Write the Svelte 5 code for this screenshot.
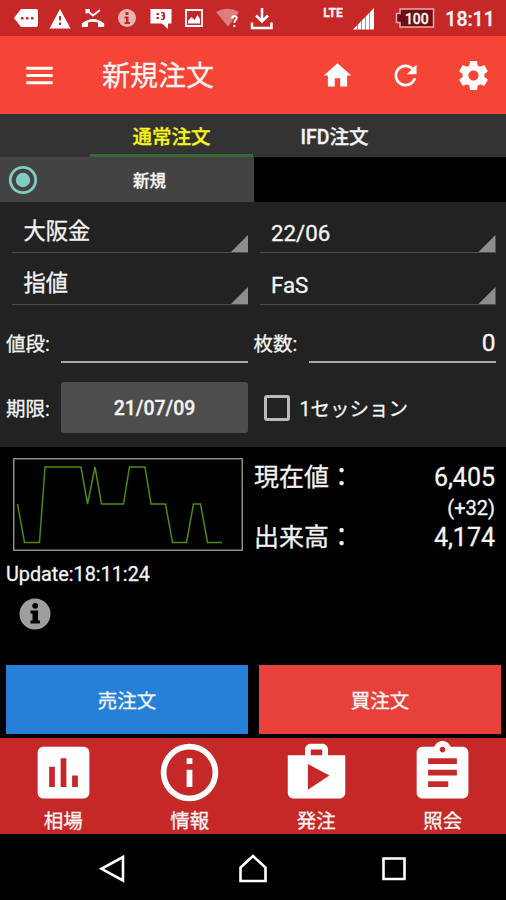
<script>
  let tab = $state("normal");
  let product = $state("大阪金");
  let month = $state("22/06");
  let priceType = $state("指値");
  let condition = $state("FaS");
  let price = $state("");
  let quantity = $state("0");
  let session = $state(false);

  const chart = "4.5,46 11.5,84.5 26.5,84.5 32,9 68,9 74.5,46 82,9 88.5,46 110.5,46 116.5,9 132,9 138,46 152.5,46 159.5,84.5 173.5,84.5 180.5,46 187.5,46 194.5,84.5 209,84.5";

  const menus = [
    { label: "相場", d: "M19 3H5c-1.1 0-2 .9-2 2v14c0 1.1.9 2 2 2h14c1.1 0 2-.9 2-2V5c0-1.1-.9-2-2-2zM9 17H7v-7h2v7zm4 0h-2V7h2v10zm4 0h-2v-4h2v4z" },
    { label: "情報", d: "M11 17h2v-6h-2v6zm1-15C6.48 2 2 6.48 2 12s4.48 10 10 10 10-4.480 10-10S17.520 2 12 2zm0 18c-4.410 0-8-3.590-8-8s3.590-8 8-8 8 3.590 8 8-3.590 8-8 8zM11 9h2V7h-2v2z" },
    { label: "発注", d: "M16 6V4c0-1.110-.89-2-2-2h-4c-1.110 0-2 .89-2 2v2H2v13c0 1.110.89 2 2 2h16c1.110 0 2-.89 2-2V6h-6zm-6-2h4v2h-4V4zM9 18V9l7.500 4L9 18z" },
    { label: "照会", d: "M19 3h-4.180C14.400 1.840 13.300 1 12 1c-1.300 0-2.400.84-2.820 2H5c-1.100 0-2 .9-2 2v14c0 1.100.9 2 2 2h14c1.100 0 2-.9 2-2V5c0-1.100-.9-2-2-2zm-7 0c.55 0 1 .45 1 1s-.45 1-1 1-1-.45-1-1 .45-1 1-1zm2 14H7v-2h7v2zm3-4H7v-2h10v2zm0-4H7V7h10v2z" }
  ];
</script>

<main>
  <div class="status">
    <div class="notices">
      <svg viewBox="0 0 24 24"><path d="M7 3h15q2 0 2 2v14q0 2-2 2H7L0 12z" /><path class="cut" d="M7 11h2.500v2.500H7zM12 11h2.500v2.500H12zM17 11h2.500v2.500H17z" /></svg>
      <svg viewBox="0 0 24 24"><path d="M12 3l10.500 19.500H1.500z" /><path class="cut" d="M11 10h2v4.500h-2zM11 16.500h2V19h-2z" /></svg>
      <svg viewBox="0 0 24 24"><path class="thin" d="M5.500 7.500V4H9M6 4.500l6 5 7-5.500" /><path d="M.8 17.500Q12 8.500 23.200 17.500V21H17v-4.500Q12 14.800 7 16.500V21H.8z" /></svg>
      <svg viewBox="0 0 24 24" class="dim"><circle cx="12" cy="12" r="9" /><path class="cut" d="M10.500 6h3v3h-3zM9.500 10.500h4V16H15v2H9.500v-2H11v-3.500H9.500z" /></svg>
      <svg viewBox="0 0 24 24"><path d="M1.500 3h21v14.500H19V23l-6-5.500H1.500z" /><path class="cut" d="M7.500 7h2.500v2H7.500zM7.500 11h2.500v2H7.500zM12 6h2q2 0 2 2v4q0 2-2 2h-2v-1.500h2v-2h-1.500V9H14V7.500h-2z" /></svg>
      <svg viewBox="0 0 24 24"><path class="frame" d="M4 4h16v16H4z" /><path d="M6 17.500V15l3.500-4 3 3 3-5 2.500 4v4.500z" /></svg>
      <svg viewBox="0 0 24 24"><path class="faint" d="M0 6Q11.500-.5 23 6L12 20.500z" /><path class="question" d="M16 12.500q.5-2.500 2.700-2.500 3.300.7 1.300 3.500-1.700 1.500-1.700 3.200M18.300 19v2" /></svg>
      <svg viewBox="0 0 24 24"><path class="line" d="M12 2v13M6 9.500l6 6 6-6M2 16.500V22h19.500v-5.500" /></svg>
    </div>
    <span class="lte">LTE</span>
    <svg class="signal" viewBox="0 0 22 22"><path d="M0 21.500L21 0v21.500z" /><path class="gaps" d="M4.500 14v8M8.500 11v11M12.500 7v15M16.500 3v19" /></svg>
    <div class="battery">
      <svg viewBox="0 0 40 20"><path d="M5 1h33.500v18H5v-4.500H1.500v-9H5z" /></svg>
      <span>100</span>
    </div>
    <span class="clock">18:11</span>
  </div>

  <header>
    <button class="burger" aria-label="menu"><svg viewBox="0 0 24 24"><path d="M3 18h18v-2H3v2zm0-5h18v-2H3v2zm0-7v2h18V6H3z" /></svg></button>
    <h1>新規注文</h1>
    <button aria-label="home"><svg viewBox="0 0 24 24"><path d="M10 20v-6h4v6h5v-8h3L12 3 2 12h3v8z" /></svg></button>
    <button aria-label="refresh"><svg viewBox="0 0 24 24"><path d="M17.650 6.350C16.200 4.900 14.210 4 12 4c-4.420 0-7.990 3.580-7.990 8s3.570 8 7.990 8c3.730 0 6.840-2.550 7.730-6h-2.080c-.82 2.330-3.040 4-5.650 4-3.310 0-6-2.690-6-6s2.690-6 6-6c1.660 0 3.140.69 4.220 1.780L13 11h7V4l-2.350 2.350z" /></svg></button>
    <button class="gear" aria-label="settings"><svg viewBox="0 0 24 24"><path d="M19.430 12.980c.04-.32.07-.64.07-.98s-.03-.66-.07-.98l2.110-1.650c.19-.15.24-.42.12-.64l-2-3.460c-.12-.22-.39-.3-.61-.22l-2.490 1c-.52-.4-1.080-.73-1.690-.98l-.38-2.650C14.460 2.180 14.250 2 14 2h-4c-.25 0-.46.18-.49.42l-.38 2.650c-.61.25-1.170.59-1.690.98l-2.490-1c-.23-.09-.49 0-.61.22l-2 3.460c-.13.22-.07.49.12.64l2.110 1.650c-.04.32-.07.65-.07.98s.03.66.07.98l-2.110 1.650c-.19.15-.24.42-.12.64l2 3.460c.12.22.39.3.61.22l2.490-1c.52.4 1.080.73 1.690.98l.38 2.650c.03.24.24.42.49.42h4c.25 0 .46-.18.49-.42l.38-2.650c.61-.25 1.170-.59 1.690-.98l2.490 1c.23.09.49 0 .61-.22l2-3.460c.12-.22.07-.49-.12-.64l-2.110-1.650zM12 15.500c-1.930 0-3.500-1.570-3.500-3.500s1.570-3.500 3.500-3.500 3.500 1.570 3.500 3.500-1.570 3.500-3.500 3.500z" /></svg></button>
  </header>

  <div class="tabs">
    <button class:active={tab === "normal"} onclick={() => (tab = "normal")}>通常注文</button>
    <button class:active={tab === "ifd"} onclick={() => (tab = "ifd")}>IFD注文</button>
  </div>

  <div class="kind">
    <div class="radio">
      <svg viewBox="0 0 30 30"><circle cx="15" cy="15" r="12.700" /><circle class="dot" cx="15" cy="15" r="7.200" /></svg>
      <span>新規</span>
    </div>
  </div>

  <form>
    <button type="button" class="spinner">{product}</button>
    <button type="button" class="spinner latin">{month}</button>
    <button type="button" class="spinner">{priceType}</button>
    <button type="button" class="spinner latin">{condition}</button>
    <label class="field"><span>値段:</span><input bind:value={price} /></label>
    <label class="field"><span>枚数:</span><input bind:value={quantity} /></label>
    <div class="limit"><span>期限:</span><button type="button">21/07/09</button></div>
    <label class="check"><input type="checkbox" bind:checked={session} />1セッション</label>
  </form>

  <section>
    <div class="left">
      <svg class="chart" viewBox="0 0 230 93"><rect x=".75" y=".75" width="228.500" height="91.500" /><polyline points={chart} /></svg>
      <p>Update:18:11:24</p>
      <svg class="info" viewBox="0 0 32 32"><circle cx="16" cy="16" r="15.500" /><path d="M11.500 12.500h7.500v10h2v3h-9.500v-3h2v-7h-2z" /><circle class="hole" cx="16.200" cy="7.800" r="2.900" /></svg>
    </div>
    <dl>
      <dt>現在値：</dt>
      <dd>6,405</dd>
      <dd class="diff">(+32)</dd>
      <dt>出来高：</dt>
      <dd>4,174</dd>
    </dl>
  </section>

  <div class="orders">
    <button class="sell">売注文</button>
    <button class="buy">買注文</button>
  </div>

  <nav>
    {#each menus as menu}
      <button><svg viewBox="0 0 24 24"><path d={menu.d} /></svg><span>{menu.label}</span></button>
    {/each}
  </nav>

  <footer>
    <svg viewBox="0 0 30 30"><path d="M25 3v23.500L3.500 14.800z" /></svg>
    <svg viewBox="0 0 30 30"><path d="M2.500 27V13.500L15 2 27.500 13.500V27z" /></svg>
    <svg viewBox="0 0 30 30"><path d="M4.500 4.500h21v20.500h-21z" /></svg>
  </footer>
</main>

<style>
:global(body) {
  margin: 0;
  background: #000;
}

main {
  display: flex;
  flex-direction: column;
  width: 506px;
  height: 900px;
  overflow: hidden;
  background: #000;
  color: #f4f4f4;
  font-family: Roboto, "Noto Sans CJK JP", sans-serif;
  font-size: 19.5px;
  -webkit-text-stroke: 0.3px;
}

button {
  padding: 0;
  border: none;
  background: none;
  color: inherit;
  font: inherit;
}

svg {
  display: block;
  flex: none;
  fill: #fff;
}

.status {
  display: flex;
  align-items: center;
  box-sizing: border-box;
  height: 36px;
  padding-left: 14px;
  background: #c62828;
}

.notices {
  display: flex;
  gap: 9.7px;
}

.notices svg {
  width: 24px;
  height: 24px;
}

.status .cut {
  fill: #c62828;
}

.status .dim {
  opacity: 0.65;
}

.status .faint {
  opacity: 0.4;
}

.status .line,
.status .thin,
.status .frame,
.status .question {
  fill: none;
  stroke: #fff;
  stroke-width: 2.5;
}

.status .thin,
.status .question {
  stroke-width: 2;
}

.status .frame {
  stroke-width: 1.8;
}

.lte {
  width: 20px;
  height: 24px;
  margin-left: 49.5px;
  font-size: 12px;
  font-weight: 700;
  line-height: 14px;
}

.signal {
  width: 22px;
  height: 22px;
  margin: 2px 0 0 10px;
}

.status .gaps {
  stroke: #c62828;
  stroke-opacity: 0.6;
  stroke-width: 1;
}

.battery {
  display: grid;
  place-items: center;
  margin-left: 20px;
}

.battery svg,
.battery span {
  grid-area: 1 / 1;
}

.battery svg {
  width: 40px;
  height: 20px;
  fill: #6d1015;
  stroke: #eda9a9;
  stroke-width: 1.5;
}

.battery span {
  padding: 1px 0 0 3px;
  font-size: 14px;
  font-weight: 500;
}

.clock {
  margin-left: 10px;
  padding-top: 2px;
  font-weight: 500;
}

header {
  display: flex;
  align-items: center;
  height: 78px;
  background: #f64436;
}

header svg {
  width: 33px;
  height: 33px;
}

header button {
  margin-right: 34.5px;
}

header .burger {
  margin: 0 45px 0 22px;
}

header .burger svg,
header .gear svg {
  width: 35px;
  height: 35px;
}

header .gear {
  margin-right: 15px;
}

h1 {
  flex: 1;
  margin: 0;
  padding-top: 3px;
  font-size: 28px;
  font-weight: 400;
  line-height: 40px;
}

.tabs {
  display: flex;
  box-sizing: border-box;
  height: 43px;
  padding-left: 90px;
  border-top: 1px solid #263238;
  background: #333;
}

.tabs button {
  width: 163px;
  padding-top: 2px;
  border-bottom: 3px solid transparent;
  font-weight: 500;
}

.tabs .active {
  border-color: #376a37;
  color: #f5f51c;
}

.kind {
  height: 45px;
}

.radio {
  display: flex;
  align-items: center;
  width: 254px;
  height: 45px;
  background: #434343;
  font-size: 16.5px;
  font-weight: 500;
}

.radio svg {
  width: 30px;
  height: 30px;
  margin-left: 8px;
}

.radio circle {
  fill: none;
  stroke: #80cbc4;
  stroke-width: 2.8;
}

.radio .dot {
  fill: #80cbc4;
  stroke: none;
}

.radio span {
  margin-left: 95px;
}

form {
  display: grid;
  grid-template-columns: 242px 242px;
  grid-template-rows: 51px 52px 57px 51px;
  column-gap: 5.5px;
  box-sizing: border-box;
  height: 245px;
  padding-left: 6px;
  background: #222;
}

.spinner {
  display: flex;
  align-items: flex-end;
  justify-content: space-between;
  margin-left: 6px;
  padding-left: 11.5px;
  border-bottom: 1.5px solid #4c4c4c;
  font-size: 22.3px;
  line-height: 42px;
}

.spinner.latin {
  line-height: 37px;
}

.spinner::after {
  content: "";
  width: 17px;
  height: 17px;
  background: #8d8d8d;
  clip-path: polygon(100% 0, 100% 100%, 0 100%);
}

.field {
  display: flex;
  height: 58px;
}

.field span {
  width: 55px;
  line-height: 79px;
}

.field input {
  flex: 1;
  min-width: 0;
  padding: 18px 0 0;
  border: none;
  border-bottom: 2px solid #aaa;
  outline: none;
  background: none;
  color: inherit;
  font: inherit;
  font-size: 24.5px;
  text-align: right;
}

.limit,
.check {
  display: flex;
  align-items: center;
  height: 51px;
  margin-top: 20px;
}

.limit span {
  width: 55px;
}

.limit button {
  flex: 1;
  height: 51px;
  padding-top: 2px;
  border-radius: 3px;
  background: #4d4d4d;
  font-weight: 500;
}

.check input {
  appearance: none;
  box-sizing: border-box;
  width: 26px;
  height: 26px;
  margin: 0 10px 0 10px;
  border: 3px solid #bababa;
  border-radius: 3px;
}

section {
  display: flex;
  height: 218px;
}

.left {
  width: 254px;
}

.chart {
  width: 230px;
  height: 93px;
  margin: 11px 0 0 13px;
}

.chart rect,
.chart polyline {
  fill: none;
  stroke: #8c8c8c;
  stroke-width: 1.5;
}

.chart polyline {
  stroke: #4c8a12;
}

.left p {
  margin: 11px 0 0 6px;
  font-size: 19.8px;
  line-height: 26px;
}

.info {
  width: 32px;
  height: 32px;
  margin: 10px 0 0 19px;
  fill: #000;
}

.info circle {
  fill: #9e9e9e;
}

.info .hole {
  fill: #000;
}

dl {
  display: grid;
  flex: 1;
  grid-template-columns: auto 1fr;
  grid-template-rows: 30px 30px 30px;
  margin: 15px 11px 0 0;
  font-size: 25px;
  line-height: 32px;
}

dd {
  margin: 0;
  text-align: right;
}

.diff {
  grid-column: 2;
  font-size: 20px;
}

.orders {
  display: flex;
  gap: 11px;
  height: 69px;
  padding: 0 5px 4px 6px;
}

.orders button {
  width: 242px;
  background: #2680d8;
}

.orders .buy {
  background: #e8403b;
}

nav {
  display: flex;
  height: 96px;
  background: #c62828;
}

nav button {
  display: flex;
  flex: 1;
  flex-direction: column;
  align-items: center;
}

nav svg {
  width: 69px;
  height: 69px;
}

nav span {
  line-height: 29px;
}

footer {
  display: flex;
  justify-content: center;
  gap: 110.5px;
  padding-top: 20px;
}

footer svg {
  width: 30px;
  height: 30px;
  fill: none;
  stroke: #fff;
  stroke-width: 2.6;
}
</style>
